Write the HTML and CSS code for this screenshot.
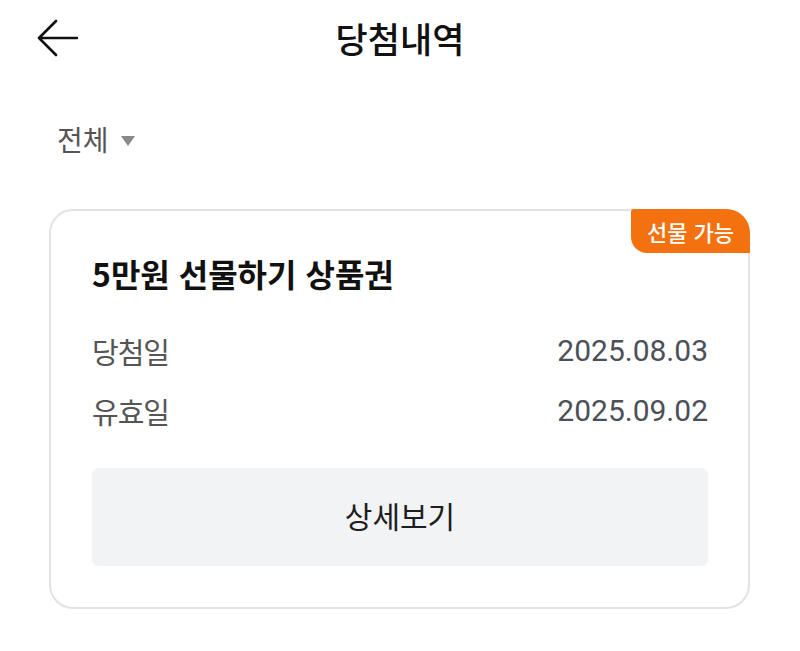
FILE: index.html
```html
<!DOCTYPE html>
<html lang="ko">
<head>
<meta charset="utf-8">
<title>당첨내역</title>
<link rel="stylesheet" href="styles.css">
</head>
<body>
<header class="topbar">
  <div class="topbar-left">
    <svg class="back-icon" width="42" height="38" viewBox="0 0 42 38" aria-hidden="true">
      <path d="M41 19 H3 M20 2 L3 19 L20 36" fill="none" stroke="#111" stroke-width="2.6" stroke-linecap="round" stroke-linejoin="round"/>
    </svg>
  </div>
  <h1 class="topbar-title">당첨내역</h1>
  <div class="topbar-right"></div>
</header>

<div class="filter">
  <span class="filter-label">전체</span>
  <span class="filter-caret"></span>
</div>

<section class="card">
  <span class="badge">선물 가능</span>
  <h2 class="card-title">5만원 선물하기 상품권</h2>
  <div class="rows">
    <div class="row">
      <span class="row-label">당첨일</span>
      <span class="row-value">2025.08.03</span>
    </div>
    <div class="row">
      <span class="row-label">유효일</span>
      <span class="row-value">2025.09.02</span>
    </div>
  </div>
  <button class="detail-btn" type="button">상세보기</button>
</section>
</body>
</html>
```

FILE: styles.css
```css
* {
  box-sizing: border-box;
}

html, body {
  margin: 0;
  padding: 0;
  background: #ffffff;
}

body {
  font-family: "Noto Sans CJK KR", "Noto Sans", sans-serif;
  color: #111111;
}

.topbar {
  display: grid;
  grid-template-columns: 1fr auto 1fr;
  align-items: center;
  height: 76px;
}

.topbar-left {
  padding-left: 36px;
  display: flex;
  align-items: center;
}

.back-icon {
  display: block;
}

.topbar-title {
  margin: 0;
  font-size: 35px;
  line-height: 44px;
  font-weight: 500;
  color: #111111;
}

.filter {
  display: flex;
  align-items: center;
  gap: 12px;
  padding: 45px 0 0 57px;
}

.filter-label {
  font-size: 28px;
  line-height: 36px;
  color: #555555;
}

.filter-caret {
  width: 0;
  height: 0;
  border-left: 7.5px solid transparent;
  border-right: 7.5px solid transparent;
  border-top: 10px solid #8a8a8a;
  margin-top: 3px;
}

.card {
  position: relative;
  margin: 52px 50px 0 49px;
  border: 2px solid #e3e3e3;
  border-radius: 24px;
  padding: 42px 40px 41px 41px;
}

.badge {
  position: absolute;
  top: -2px;
  right: -2px;
  width: 119px;
  height: 44px;
  background: #f4710f;
  color: #ffffff;
  font-size: 22px;
  font-weight: 500;
  line-height: 44px;
  text-align: center;
  border-radius: 3px 24px 0 16px;
}

.card-title {
  margin: 0;
  font-size: 32px;
  line-height: 40px;
  font-weight: 700;
  color: #111111;
}

.rows {
  display: flex;
  flex-direction: column;
  gap: 20px;
  margin-top: 38px;
}

.row {
  display: flex;
  justify-content: space-between;
  align-items: center;
  height: 40px;
}

.row-label {
  font-size: 29px;
  letter-spacing: -1px;
  line-height: 40px;
  color: #555555;
}

.row-value {
  font-family: Roboto, "Noto Sans", sans-serif;
  font-size: 30px;
  line-height: 40px;
  color: #4b5058;
}

.detail-btn {
  display: flex;
  align-items: center;
  justify-content: center;
  width: 100%;
  height: 98px;
  margin-top: 37px;
  border: none;
  border-radius: 7px;
  background: #f2f3f5;
  font-family: "Noto Sans CJK KR", "Noto Sans", sans-serif;
  font-size: 30px;
  line-height: 40px;
  color: #1e1e1e;
  padding: 0 0 4px;
}
```
